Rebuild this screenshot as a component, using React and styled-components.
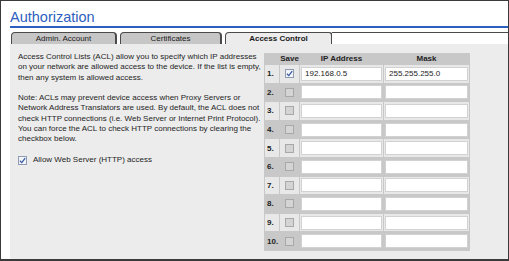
import React from "react";
import styled, { createGlobalStyle } from "styled-components";

const GlobalStyle = createGlobalStyle`
  body {
    margin: 0;
    background: #ffffff;
    font-family: "Liberation Sans", Arial, sans-serif;
  }
`;

const Frame = styled.div`
  width: 509px;
  height: 261px;
  box-sizing: border-box;
  border: 1px solid #3a3a3a;
  border-bottom-width: 2px;
  padding-left: 9px;
  display: flex;
  flex-direction: column;
  background: #fff;
  overflow: hidden;
`;

const Title = styled.h1`
  margin: 0;
  padding-top: 8px;
  height: 27px;
  box-sizing: border-box;
  font-size: 14.5px;
  line-height: 17px;
  font-weight: normal;
  color: #2d5fbe;
  border-bottom: 2px solid #2d5fbe;
`;

const TabStrip = styled.div`
  display: flex;
  margin-top: 4px;
  height: 12px;
  padding-left: 1px;
  gap: 3px;
`;

const Tab = styled.div`
  width: ${(p) => p.$w}px;
  box-sizing: border-box;
  border: 1px solid #4a4a4a;
  border-bottom: none;
  border-right-width: 2px;
  border-radius: 4px 4px 0 0;
  background: ${(p) => (p.$active ? "#ececec" : "#c6c6c6")};
  font-size: 8px;
  line-height: 11px;
  text-align: center;
  font-weight: ${(p) => (p.$active ? "bold" : "normal")};
  color: #1a1a1a;
`;

const TabFill = styled.div`
  flex: 1;
  margin-left: -4px;
  border-top: 1px solid #4a4a4a;
  background: #fff;
`;

const Panel = styled.div`
  flex: 1;
  background: #ececec;
  display: flex;
  padding: 9px 0 0 8px;
`;

const Info = styled.div`
  width: 246px;
  font-size: 8px;
  line-height: 10.3px;
  color: #1e1e1e;
  margin-top: -1px;
`;

const Para = styled.p`
  margin: 0 0 10.3px 0;
  white-space: nowrap;
`;

const CheckRow = styled.label`
  display: flex;
  align-items: center;
  gap: 6px;
  font-size: 8px;
`;

const Box = styled.span`
  width: 9px;
  height: 9px;
  box-sizing: border-box;
  border: 1px solid ${(p) => (p.$checked ? "#8f9bb0" : "#a8a8a8")};
  background: ${(p) => (p.$checked ? "#f2f4f8" : "#d4d4d4")};
  display: inline-flex;
  align-items: center;
  justify-content: center;
  flex-shrink: 0;
`;

const Table = styled.div`
  align-self: flex-start;
  background: #c8c8c8;
  padding: 1px;
  display: flex;
  flex-direction: column;
  gap: 1px;
`;

const Row = styled.div`
  display: grid;
  grid-template-columns: 14px 19px 83px 85px;
  column-gap: 1px;
  height: ${(p) => p.$h}px;
`;

const Head = styled.div`
  font-size: 8px;
  font-weight: bold;
  line-height: 10px;
  text-align: center;
  color: #222;
`;

const Cell = styled.div`
  background: ${(p) => (p.$alt ? "#e8e8e8" : "transparent")};
  display: flex;
  align-items: center;
  justify-content: ${(p) => (p.$center ? "center" : "flex-start")};
  font-size: 8px;
  font-weight: bold;
  color: #222;
  padding-left: ${(p) => (p.$pad ? 2 : 0)}px;
`;

const Field = styled.div`
  width: 100%;
  height: 14px;
  margin: 0 1px;
  box-sizing: border-box;
  border: 1px solid #d2d2d2;
  background: #fff;
  font-size: 8px;
  font-weight: normal;
  line-height: 12px;
  padding-left: 3px;
  color: #222;
`;

const Tick = () => (
  <svg width="7" height="7" viewBox="0 0 6 6">
    <path d="M0.8 3.2 L2.4 4.8 L5.3 0.9" stroke="#3a5ba8" strokeWidth="1.1" fill="none" />
  </svg>
);

const rows = Array.from({ length: 10 }, (_, i) => ({
  n: i + 1,
  checked: i === 0,
  ip: i === 0 ? "192.168.0.5" : "",
  mask: i === 0 ? "255.255.255.0" : "",
}));

export default function App() {
  return (
    <>
      <GlobalStyle />
      <Frame>
        <Title>Authorization</Title>
        <TabStrip>
          <Tab $w={106}>Admin. Account</Tab>
          <Tab $w={102}>Certificates</Tab>
          <Tab $w={108} $active>Access Control</Tab>
          <TabFill />
        </TabStrip>
        <Panel>
          <Info>
            <Para>
              Access Control Lists (ACL) allow you to specify which IP addresses
              <br />
              on your network are allowed access to the device. If the list is empty,
              <br />
              then any system is allowed access.
            </Para>
            <Para>
              Note: ACLs may prevent device access when Proxy Servers or
              <br />
              Network Address Translators are used. By default, the ACL does not
              <br />
              check HTTP connections (i.e. Web Server or Internet Print Protocol).
              <br />
              You can force the ACL to check HTTP connections by clearing the
              <br />
              checkbox below.
            </Para>
            <CheckRow>
              <Box $checked>
                <Tick />
              </Box>
              Allow Web Server (HTTP) access
            </CheckRow>
          </Info>
          <Table>
            <Row $h={10}>
              <Head />
              <Head>Save</Head>
              <Head>IP Address</Head>
              <Head>Mask</Head>
            </Row>
            {rows.map((r) => {
              const alt = r.n % 2 === 1;
              return (
                <Row key={r.n} $h={17.6}>
                  <Cell $alt={alt} $pad>
                    {r.n}.
                  </Cell>
                  <Cell $alt={alt} $center>
                    <Box $checked={r.checked}>{r.checked && <Tick />}</Box>
                  </Cell>
                  <Cell $alt={alt}>
                    <Field>{r.ip}</Field>
                  </Cell>
                  <Cell $alt={alt}>
                    <Field>{r.mask}</Field>
                  </Cell>
                </Row>
              );
            })}
          </Table>
        </Panel>
      </Frame>
    </>
  );
}
